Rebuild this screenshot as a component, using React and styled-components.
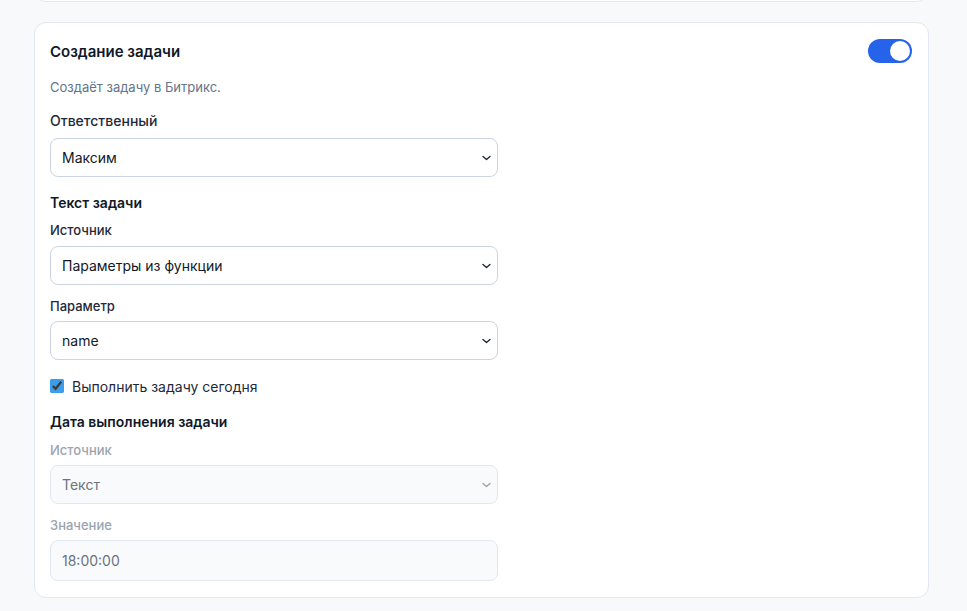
import React, { useState } from "react";
import styled, { createGlobalStyle } from "styled-components";

const GlobalStyle = createGlobalStyle`
  html, body {
    margin: 0;
    padding: 0;
    background: #f8f9fb;
    font-family: Inter, "Noto Sans", sans-serif;
    color: #111827;
  }
`;

const Page = styled.div`
  display: flex;
  flex-direction: column;
  gap: 20px;
  padding: 0 38px 12px 34px;
  margin-top: -52px;
`;

const Card = styled.section`
  background: #fff;
  border: 1px solid #e2e8f0;
  border-radius: 12px;
  padding: 16px 16px 16px 15px;
  min-height: ${(p) => p.minHeight || "auto"};
`;

const Header = styled.div`
  display: flex;
  align-items: center;
  justify-content: space-between;
  height: 24px;
`;

const Title = styled.h3`
  margin: 0;
  font-size: 15px;
  font-weight: 600;
  color: #111827;
`;

const Toggle = styled.button`
  width: 44px;
  height: 24px;
  border: none;
  border-radius: 12px;
  padding: 2px;
  background: ${(p) => (p.on ? "#2563eb" : "#cbd5e1")};
  display: flex;
  justify-content: ${(p) => (p.on ? "flex-end" : "flex-start")};
  cursor: pointer;
  &::after {
    content: "";
    width: 20px;
    height: 20px;
    border-radius: 50%;
    background: #fff;
  }
`;

const Desc = styled.p`
  margin: 14px 0 0;
  font-size: 13px;
  line-height: 20px;
  color: #64748b;
`;

const Body = styled.div`
  width: 448px;
  display: flex;
  flex-direction: column;
`;

const Label = styled.label`
  display: block;
  font-size: ${(p) => (p.small ? "13px" : "14px")};
  line-height: ${(p) => (p.small ? "18px" : "20px")};
  font-weight: 500;
  color: ${(p) => (p.disabled ? "#9ca3af" : "#1e293b")};
  margin-top: ${(p) => p.mt || 0}px;
  margin-bottom: ${(p) => p.mb || 7}px;
`;

const Section = styled.h4`
  margin: ${(p) => p.mt || 16}px 0 0;
  font-size: 14px;
  line-height: 20px;
  font-weight: 600;
  color: #111827;
`;

const SelectWrap = styled.div`
  position: relative;
  svg {
    position: absolute;
    right: 7px;
    top: 50%;
    transform: translateY(-50%);
    pointer-events: none;
  }
`;

const NativeSelect = styled.select`
  appearance: none;
  width: 100%;
  height: 39px;
  border: 1px solid ${(p) => (p.disabled ? "#e2e8f0" : "#cbd5e1")};
  border-radius: 8px;
  padding: 0 30px 0 11px;
  font-family: inherit;
  font-size: 14px;
  color: ${(p) => (p.disabled ? "#6b7280" : "#111827")};
  background: ${(p) => (p.disabled ? "#f8fafc" : "#fff")};
  opacity: 1;
  outline: none;
`;

const Input = styled.input`
  box-sizing: border-box;
  width: 100%;
  height: 41px;
  border: 1px solid #e2e8f0;
  border-radius: 8px;
  padding: 0 11px;
  font-family: inherit;
  font-size: 14px;
  color: #6b7280;
  background: #f8fafc;
  outline: none;
`;

const CheckRow = styled.label`
  display: flex;
  align-items: center;
  gap: 8px;
  margin-top: 16px;
  height: 20px;
  font-size: 14px;
  color: #1e293b;
  input {
    margin: 0;
    width: 14px;
    height: 14px;
    accent-color: #3b9eea;
  }
`;

const Chevron = ({ color }) => (
  <svg width="9" height="6" viewBox="0 0 9 6" fill="none">
    <path
      d="M1 1.5l3.5 3 3.5-3"
      stroke={color}
      strokeWidth="1.4"
      strokeLinecap="round"
      strokeLinejoin="round"
    />
  </svg>
);

const Select = ({ disabled, value, label }) => (
  <SelectWrap>
    <NativeSelect disabled={disabled} defaultValue={value}>
      <option value={value}>{label}</option>
    </NativeSelect>
    <Chevron color={disabled ? "#9ca3af" : "#1f2937"} />
  </SelectWrap>
);

export default function App() {
  const [on, setOn] = useState(true);
  const [today, setToday] = useState(true);
  return (
    <>
      <GlobalStyle />
      <Page>
        <Card minHeight="20px" />
        <Card>
          <Header>
            <Title>Создание задачи</Title>
            <Toggle on={on} onClick={() => setOn(!on)} aria-label="toggle" />
          </Header>
          <Desc>Создаёт задачу в Битрикс.</Desc>
          <Body>
            <Label mt={14}>Ответственный</Label>
            <Select value="max" label="Максим" />
            <Section>Текст задачи</Section>
            <Label small mt={8}>Источник</Label>
            <Select value="fn" label="Параметры из функции" />
            <Label small mt={12} mb={6}>Параметр</Label>
            <Select value="name" label="name" />
            <CheckRow>
              <input
                type="checkbox"
                checked={today}
                onChange={() => setToday(!today)}
              />
              Выполнить задачу сегодня
            </CheckRow>
            <Section>Дата выполнения задачи</Section>
            <Label small disabled mt={9} mb={6}>Источник</Label>
            <Select disabled value="text" label="Текст" />
            <Label small disabled mt={12} mb={6}>Значение</Label>
            <Input disabled defaultValue="18:00:00" />
          </Body>
        </Card>
      </Page>
    </>
  );
}
